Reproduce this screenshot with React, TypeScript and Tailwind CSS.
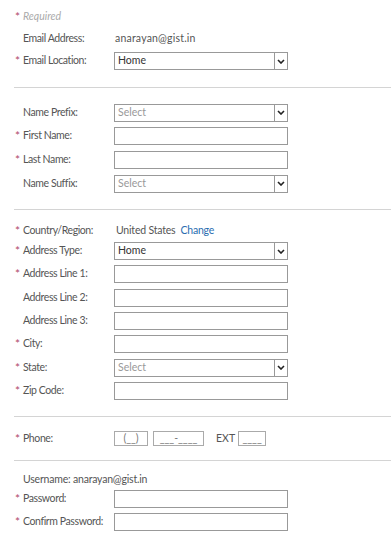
import { ReactNode } from 'react'

const font = { fontFamily: 'Lato, "Open Sans", sans-serif' }

function Star({ on }: { on?: boolean }) {
  return <span className="w-[8px] text-[12px] leading-none text-[#b04a6a]">{on ? '*' : ''}</span>
}

function Row({ label, req, h = 'h-[23px]', children }: { label: string; req?: boolean; h?: string; children?: ReactNode }) {
  return (
    <div className={`flex items-center ${h}`}>
      <div className="flex w-[114px] items-center pl-[15px]">
        <Star on={req} />
        <span className="tracking-[-0.4px] text-[#555]">{label}</span>
      </div>
      {children}
    </div>
  )
}

function TextBox() {
  return <div className="h-[18px] w-[174px] border border-[#999] bg-white" />
}

function SelectBox({ value, placeholder }: { value?: string; placeholder?: boolean }) {
  return (
    <div className="flex h-[18px] w-[174px] border border-[#999] bg-white">
      <div className={`flex flex-1 items-center pl-[3px] ${placeholder ? 'text-[#999]' : 'text-[#333]'}`}>
        {value}
      </div>
      <div className="flex w-[13px] items-center justify-center border-l border-[#999]">
        <svg width="8" height="5" viewBox="0 0 8 5">
          <path d="M1 1l3 3 3-3" fill="none" stroke="#222" strokeWidth="1.6" />
        </svg>
      </div>
    </div>
  )
}

function Divider() {
  return <div className="ml-[14px] h-px bg-[#d4d4d4]" />
}

export default function App() {
  return (
    <div className="h-[547px] w-[391px] overflow-hidden bg-white text-[10.5px]" style={font}>
      {/* Email */}
      <div className="pt-[6px] pb-[15px]">
        <div className="flex h-[22px] items-center pl-[15px]">
          <Star on />
          <span className="italic text-[#aaa]">Required</span>
        </div>
        <Row label="Email Address:" h="h-[22px]">
          <span className="ml-[1px] tracking-[0.2px] text-[#555]">anarayan@gist.in</span>
        </Row>
        <Row label="Email Location:" req h="h-[22px]">
          <SelectBox value="Home" />
        </Row>
      </div>
      <Divider />

      {/* Name */}
      <div className="pt-[13px] pb-[14px]">
        <Row label="Name Prefix:">
          <SelectBox value="Select" placeholder />
        </Row>
        <Row label="First Name:" req h="h-[24px]">
          <TextBox />
        </Row>
        <Row label="Last Name:" req h="h-[24px]">
          <TextBox />
        </Row>
        <Row label="Name Suffix:">
          <SelectBox value="Select" placeholder />
        </Row>
      </div>
      <Divider />

      {/* Address */}
      <div className="pt-[12px] pb-[14px]">
        <Row label="Country/Region:" req h="h-[18px]">
          <span className="ml-[2px] tracking-[-0.2px] text-[#555]">United States</span>
          <span className="ml-[5px] tracking-[-0.2px] text-[#2a6db0]">Change</span>
        </Row>
        <Row label="Address Type:" req h="h-[22px]">
          <SelectBox value="Home" />
        </Row>
        <Row label="Address Line 1:" req h="h-[24px]">
          <TextBox />
        </Row>
        <Row label="Address Line 2:">
          <TextBox />
        </Row>
        <Row label="Address Line 3:">
          <TextBox />
        </Row>
        <Row label="City:" req h="h-[24px]">
          <TextBox />
        </Row>
        <Row label="State:" req>
          <SelectBox value="Select" placeholder />
        </Row>
        <Row label="Zip Code:" req>
          <TextBox />
        </Row>
      </div>
      <Divider />

      {/* Phone */}
      <div className="pt-[11px] pb-[11px]">
        <Row label="Phone:" req h="h-[21px]">
          <div className="flex h-[15px] w-[34px] items-center justify-center border border-[#aaa] text-[#777]">(__)</div>
          <div className="ml-[5px] flex h-[15px] w-[51px] items-center justify-center border border-[#aaa] text-[#777]">___-____</div>
          <span className="ml-[12px] text-[#555]">EXT</span>
          <div className="ml-[3px] flex h-[15px] w-[28px] items-center justify-center border border-[#aaa] text-[#777]">____</div>
        </Row>
      </div>
      <Divider />

      {/* Account */}
      <div className="pt-[10px]">
        <div className="flex h-[18px] items-center pl-[23px] tracking-[-0.2px] text-[#555]">Username: anarayan@gist.in</div>
        <Row label="Password:" req h="h-[20px]">
          <TextBox />
        </Row>
        <Row label="Confirm Password:" req h="h-[26px]">
          <TextBox />
        </Row>
      </div>
    </div>
  )
}
